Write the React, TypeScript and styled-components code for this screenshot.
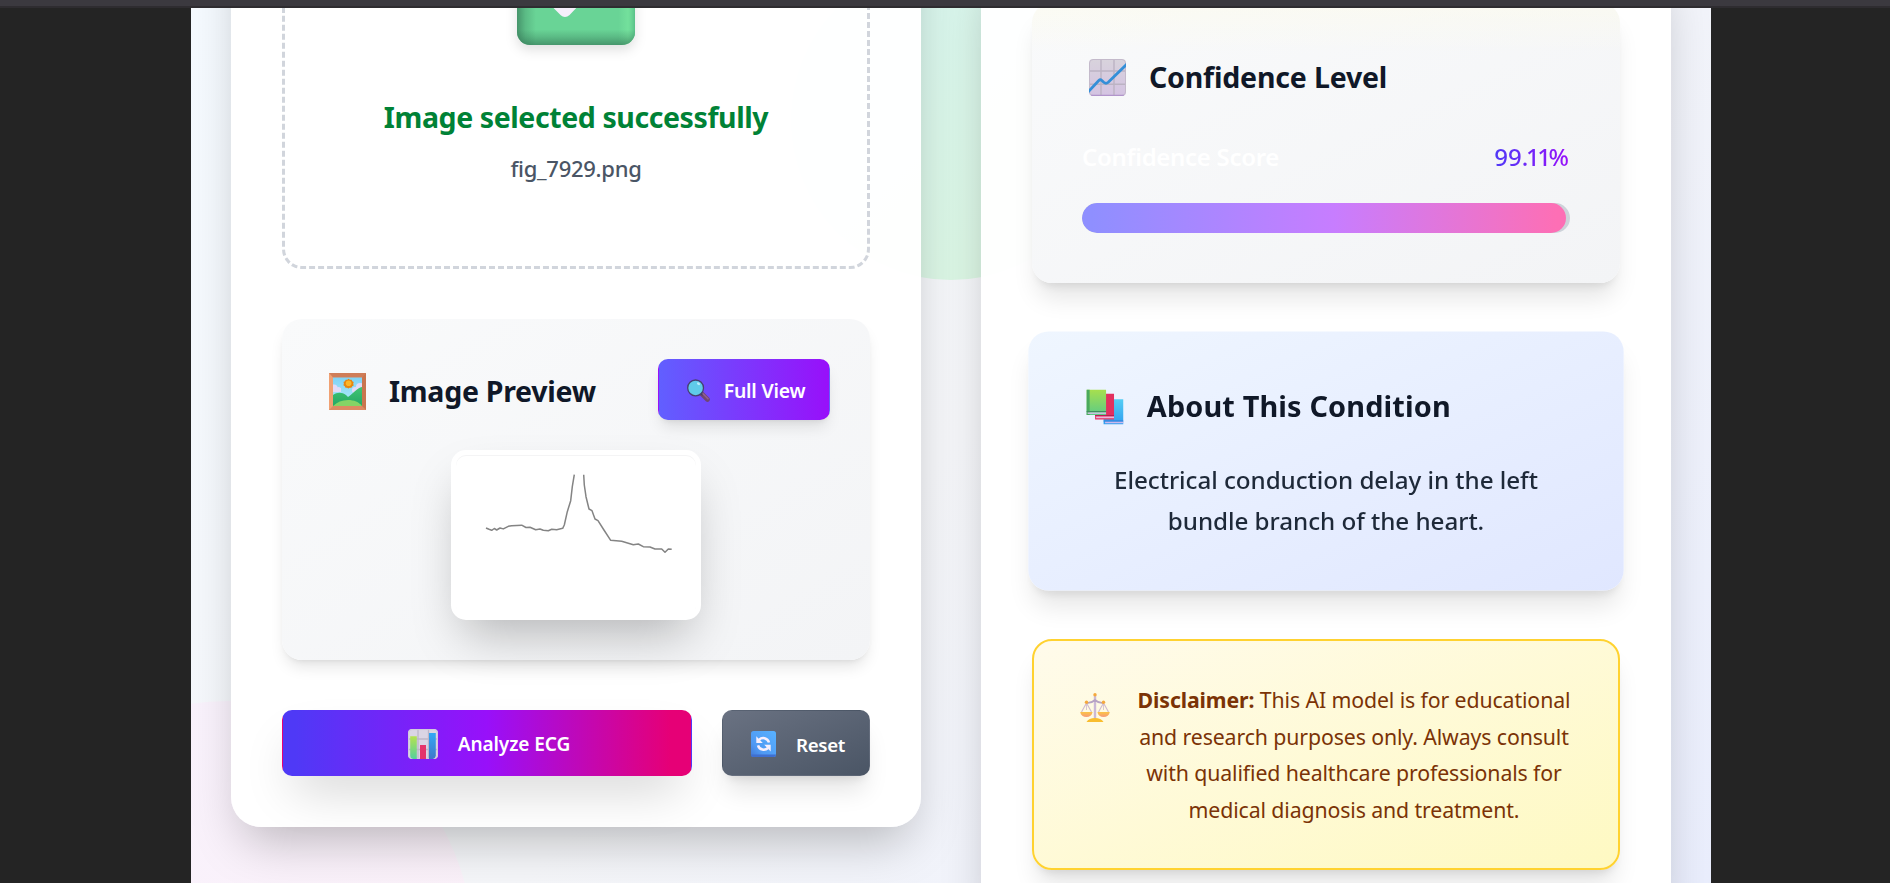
import React from 'react';
import styled, { createGlobalStyle } from 'styled-components';

const GlobalStyle = createGlobalStyle`
  * { box-sizing: border-box; }
  html, body { margin: 0; padding: 0; background: #242424; }
  body {
    overflow: hidden;
    font-family: 'Noto Sans', 'Open Sans', sans-serif;
    color: #101828;
  }
  h2, h3, p { margin: 0; }
  svg { display: block; flex: none; }
`;

/* ---------- page frame ---------- */

const Page = styled.div`
  height: 883px;
  display: flex;
  flex-direction: column;
  overflow: hidden;
  background: #242424;
`;

const TopBar = styled.div`
  flex: none;
  height: 8px;
  background: #3b393f;
  border-bottom: 2px solid #2e2c30;
`;

const Content = styled.main`
  position: relative;
  flex: none;
  width: 1520px;
  height: 875px;
  margin-left: 191px;
  padding: 0 40px;
  overflow: hidden;
  background: linear-gradient(135deg, #f5faff 0%, #f5f6f9 50%, #eaeefd 100%);
`;

const Orb = styled.div<{ $size: number; $x: number; $y: number; $fill: string }>`
  position: absolute;
  left: ${(p) => p.$x}px;
  top: ${(p) => p.$y}px;
  width: ${(p) => p.$size}px;
  height: ${(p) => p.$size}px;
  border-radius: 50%;
  background: ${(p) => p.$fill};
`;

const Columns = styled.div`
  position: relative;
  display: grid;
  grid-template-columns: 690px 690px;
  gap: 60px;
  align-items: start;
`;

const Card = styled.section<{ $lift: number }>`
  margin-top: -${(p) => p.$lift}px;
  padding: 50px;
  border: 1px solid rgba(255, 255, 255, 0.6);
  border-radius: 30px;
  background: rgba(255, 255, 255, 0.96);
  box-shadow: 0 25px 50px -12px rgba(0, 0, 0, 0.25);
`;

/* ---------- upload column ---------- */

const DropZone = styled.div`
  height: 400px;
  padding-top: 55px;
  display: flex;
  flex-direction: column;
  align-items: center;
  border: 3px dashed #d1d5dc;
  border-radius: 20px;
`;

const CheckMark = styled.div`
  filter: drop-shadow(0 5px 6px rgba(0, 0, 0, 0.12));
`;

const SuccessTitle = styled.h3`
  margin-top: 52px;
  font-size: 28.5px;
  font-weight: 700;
  line-height: 40px;
  letter-spacing: -0.41px;
  color: #008236;
`;

const FileName = styled.p`
  margin-top: 16px;
  font-size: 22px;
  font-weight: 500;
  line-height: 30px;
  letter-spacing: -0.28px;
  color: #4a5565;
`;

const PreviewCard = styled.div`
  margin-top: 50px;
  padding: 40px;
  border-radius: 20px;
  background: linear-gradient(to bottom right, #f9fafb, #f3f4f6);
  box-shadow: 0 10px 15px -3px rgba(0, 0, 0, 0.1), 0 4px 6px -4px rgba(0, 0, 0, 0.1);
`;

const PreviewHeader = styled.div`
  display: flex;
  align-items: center;
  justify-content: space-between;
  height: 61px;
`;

const Title = styled.h2<{ $track: number }>`
  display: flex;
  align-items: center;
  height: 48px;
  padding-left: 7px;
  gap: 23px;
  font-size: 28.5px;
  font-weight: 700;
  letter-spacing: ${(p) => p.$track}px;
  color: #101828;
`;

const TitleDrop = styled.div`
  padding-top: 3px;
`;

const Button = styled.button`
  display: flex;
  align-items: center;
  justify-content: center;
  border: 1px solid transparent;
  border-radius: 10px;
  font-family: inherit;
  font-weight: 600;
  color: #fff;
`;

const FullViewButton = styled(Button)`
  width: 172px;
  height: 61px;
  gap: 14px;
  padding: 1px 0 0 4px;
  font-size: 19.4px;
  letter-spacing: -0.23px;
  background-image: linear-gradient(90deg, #615fff, #9810fa);
  box-shadow: 0 10px 15px -3px rgba(0, 0, 0, 0.1), 0 4px 6px -4px rgba(0, 0, 0, 0.1);
`;

const AnalyzeButton = styled(Button)`
  flex: 1;
  height: 66px;
  gap: 20px;
  padding: 2px 0 0 4px;
  font-size: 19.1px;
  letter-spacing: -0.11px;
  background-image: linear-gradient(90deg, #4f39f6 3%, #9810fa 50%, #e60076 95%);
  box-shadow: 0 25px 50px -12px rgba(0, 0, 0, 0.18);
`;

const ResetButton = styled(Button)`
  width: 148px;
  height: 66px;
  gap: 20px;
  padding: 2px 0 0 4px;
  font-size: 18.7px;
  letter-spacing: -0.38px;
  background-image: linear-gradient(to bottom right, #6a7282, #4a5565);
  box-shadow: 0 20px 25px -5px rgba(0, 0, 0, 0.1), 0 8px 10px -6px rgba(0, 0, 0, 0.1);
`;

const Actions = styled.div`
  display: flex;
  gap: 30px;
  margin-top: 50px;
`;

const Trace = styled.figure`
  width: 250px;
  height: 170px;
  margin: 30px auto 0;
  padding: 5px;
  border-radius: 15px;
  background: #fff;
  box-shadow: 0 25px 50px -12px rgba(0, 0, 0, 0.27);
`;

const TraceImage = styled.div`
  height: 160px;
  border-radius: 10px;
  box-shadow: inset 0 1px 0 #f4f4f5;
`;

/* ---------- result column ---------- */

const ConfidenceCard = styled.div`
  height: 280px;
  padding: 50px;
  border-radius: 20px;
  background: linear-gradient(180deg, rgba(254, 252, 232, 0.45), rgba(254, 252, 232, 0) 50px),
    linear-gradient(to bottom right, #f9fafb, #f3f4f6);
  box-shadow: 0 20px 25px -5px rgba(0, 0, 0, 0.1), 0 8px 10px -6px rgba(0, 0, 0, 0.1);
`;

const ScoreRow = styled.div`
  display: flex;
  justify-content: space-between;
  align-items: center;
  height: 36px;
  margin-top: 37px;
`;

const ScoreLabel = styled.span`
  font-size: 24px;
  font-weight: 600;
  letter-spacing: -0.3px;
  color: #fff;
`;

const ScoreValue = styled.span`
  padding-right: 1px;
  font-size: 24px;
  font-weight: 500;
  background: linear-gradient(90deg, #4f39f6, #9810fa);
  background-clip: text;
  -webkit-background-clip: text;
  color: transparent;
`;

const Snug = styled.span`
  letter-spacing: -2.4px;
`;

const Track = styled.div`
  height: 30px;
  margin-top: 29px;
  border-radius: 15px;
  overflow: hidden;
  background: #cdd2d9;
`;

const Fill = styled.div`
  height: 100%;
  border-radius: 15px;
  background: linear-gradient(90deg, #8f8fff 2%, #c77dff 52%, #fd6fb5 98%);
`;

const AboutCard = styled.div`
  height: 256px;
  margin-top: 50px;
  padding: 50px;
  border-radius: 20px;
  background: linear-gradient(to bottom right, #eff6ff, #e0e7ff);
  box-shadow: 0 20px 25px -5px rgba(0, 0, 0, 0.1), 0 8px 10px -6px rgba(0, 0, 0, 0.1);
  transform: scale(1.0125);
`;

const AboutText = styled.p`
  margin-top: 29px;
  font-size: 23.9px;
  font-weight: 500;
  line-height: 39.8px;
  letter-spacing: -0.04px;
  text-align: center;
  color: #1e2939;
`;

const DisclaimerCard = styled.div`
  display: flex;
  gap: 20px;
  height: 231px;
  margin-top: 50px;
  padding: 41px 40px 39px 46px;
  border: 2px solid #ffd230;
  border-radius: 20px;
  background: linear-gradient(to bottom right, #fffbeb, #fef9c2);
  box-shadow: 0 20px 25px -5px rgba(0, 0, 0, 0.1), 0 8px 10px -6px rgba(0, 0, 0, 0.1);
`;

const ScalesSlot = styled.div`
  padding-top: 11px;
`;

const DisclaimerText = styled.p`
  flex: 1;
  font-size: 21.3px;
  line-height: 36.7px;
  letter-spacing: -0.12px;
  text-align: center;
  color: #7b3306;
`;

/* ---------- pictograms ---------- */

const CheckIcon = () => (
  <svg width="118" height="118" viewBox="0 0 118 118">
    <defs>
      <linearGradient id="ckL" x1="0" x2="1" y1="0" y2="0">
        <stop offset="0" stopColor="#2f6d50" stopOpacity=".62" />
        <stop offset=".07" stopColor="#2f6d50" stopOpacity=".25" />
        <stop offset=".16" stopColor="#2f6d50" stopOpacity="0" />
        <stop offset=".86" stopColor="#7ae8a0" stopOpacity="0" />
        <stop offset=".94" stopColor="#7ae8a0" stopOpacity=".6" />
        <stop offset="1" stopColor="#58c088" />
      </linearGradient>
      <linearGradient id="ckB" x1="0" x2="0" y1="1" y2="0">
        <stop offset="0" stopColor="#2f6d50" stopOpacity=".6" />
        <stop offset=".07" stopColor="#2f6d50" stopOpacity=".24" />
        <stop offset=".13" stopColor="#2f6d50" stopOpacity="0" />
      </linearGradient>
    </defs>
    <rect width="118" height="118" rx="13" fill="#69d496" />
    <rect width="118" height="118" rx="13" fill="url(#ckL)" />
    <rect width="118" height="118" rx="13" fill="url(#ckB)" />
    <path d="M26 62 48 84 94 36" fill="none" stroke="#f6effb" strokeWidth="12" strokeLinecap="round" strokeLinejoin="round" />
  </svg>
);

const PictureIcon = () => (
  <svg width="37" height="37" viewBox="0 0 37 37">
    <defs>
      <linearGradient id="sky" x1="0" x2="0" y1="0" y2="1">
        <stop offset="0" stopColor="#7fd3f5" />
        <stop offset="1" stopColor="#b4ecfb" />
      </linearGradient>
      <linearGradient id="hill" x1="0" x2="0" y1="0" y2="1">
        <stop offset="0" stopColor="#41c573" />
        <stop offset="1" stopColor="#22a565" />
      </linearGradient>
      <clipPath id="pane"><path d="M4 4.5h29V33H4z" /></clipPath>
    </defs>
    <path d="M0 0h37v37H0z" fill="#dd8a62" />
    <path d="M0 0h37l-4 4.500H4z" fill="#cf7d58" />
    <path d="M0 0l4 4.500V33l-4 4z" fill="#f0a173" />
    <path d="M37 0l-4 4.500V33l4 4z" fill="#c9764f" />
    <path d="M4 4.500h29V33H4z" fill="url(#sky)" />
    <g clipPath="url(#pane)">
      <g fill="#e2daf7">
        <circle cx="5" cy="15" r="3.600" /><circle cx="9.500" cy="16.500" r="2.500" /><path d="M4 15h8v4H4z" />
        <circle cx="31" cy="14" r="4" /><circle cx="26" cy="17" r="3" /><path d="M23 17h10v5H25z" />
      </g>
      <path d="M19.600 5.800l1.300 1 1.700-.1.700 1.500 1.400.9-.5 1.700.5 1.600-1.500.8-.8 1.500h-1.700l-1.300.9-1.300-.9h-1.600l-.7-1.500-1.400-.9.500-1.700-.4-1.600 1.400-.8.800-1.500h1.600z" fill="#e8860f" />
      <circle cx="19.600" cy="10.200" r="2.800" fill="#fcb628" />
      <path d="M4 22c4-3 9-3 13 0l2 2c4-3 6-5 9-7.500 2-1.700 3.500-2 5-2.500v20H4z" fill="url(#hill)" />
      <path d="M4 33c4-4 9-6 15-6s11 2 14 6z" fill="#85d465" />
    </g>
  </svg>
);

const MagnifierIcon = () => (
  <svg width="23" height="23" viewBox="0 0 23 23">
    <path d="M14.500 14.500l6 6" stroke="#6f4770" strokeWidth="4.600" strokeLinecap="round" />
    <path d="M13 13l3 3" stroke="#463a63" strokeWidth="2.400" />
    <path d="M16 14.800l5 5" stroke="#94608e" strokeWidth="1.600" strokeLinecap="round" />
    <circle cx="8.600" cy="8.900" r="7.900" fill="#5fcbe9" stroke="#464170" strokeWidth="1.300" />
    <ellipse cx="11.500" cy="4.700" rx="1.700" ry="1.200" fill="#b9edfa" transform="rotate(35 11.500 4.700)" />
  </svg>
);

const BarChartIcon = () => (
  <svg width="30" height="30" viewBox="0 0 30 30">
    <defs>
      <linearGradient id="bg1" x1="0" x2="0" y1="0" y2="1"><stop stopColor="#b4e24f" /><stop offset="1" stopColor="#55cf9d" /></linearGradient>
      <linearGradient id="bg2" x1="0" x2="0" y1="0" y2="1"><stop stopColor="#33a8f5" /><stop offset="1" stopColor="#3f77c9" /></linearGradient>
    </defs>
    <rect width="30" height="30" rx="4" fill="#dad5e4" />
    <path d="M0 10h30M0 20.500h30M10 0v30M20.500 0v30" stroke="#bdb6c8" strokeWidth="1.300" />
    <rect x=".6" y=".6" width="28.800" height="28.800" rx="3.500" fill="none" stroke="#cfc9da" />
    <path d="M2.200 7.300h6.600V30H5q-2.800-.6-2.800-3z" fill="url(#bg1)" />
    <path d="M12 16h6v14h-6z" fill="#e4346b" />
    <path d="M21 4h6.800v23q-.6 2.600-3 3H21z" fill="url(#bg2)" />
  </svg>
);

const CycleIcon = () => (
  <svg width="25" height="26" viewBox="0 0 25 26">
    <defs>
      <linearGradient id="cy" x1="0" x2="1" y1="1" y2="0">
        <stop stopColor="#4177d6" /><stop offset=".3" stopColor="#4f99f3" /><stop offset="1" stopColor="#58b2ff" />
      </linearGradient>
    </defs>
    <rect width="25" height="26" rx="2.500" fill="url(#cy)" />
    <path d="M0 23.500h25v0q0 2.500-2.500 2.500h-20Q0 26 0 23.500z" fill="#3f6fd0" />
    <g fill="none" stroke="#f7effc" strokeWidth="2.500">
      <path d="M8 8.800c3-2.800 8.500-2.200 10 2.700" />
      <path d="M17 17c-3 2.800-8.500 2.200-10-2.700" />
    </g>
    <path d="M5.300 5.300v6.700h6.500zM19.700 20.500v-6.700h-6.500z" fill="#f7effc" />
  </svg>
);

const TrendIcon = () => (
  <svg width="37" height="37" viewBox="0 0 37 37">
    <defs>
      <linearGradient id="tr" x1="0" x2="0" y1="0" y2="1"><stop stopColor="#d8d3dc" /><stop offset="1" stopColor="#d4c3e2" /></linearGradient>
      <clipPath id="trc"><rect width="37" height="37" rx="4" /></clipPath>
    </defs>
    <g clipPath="url(#trc)">
      <path d="M0 0h37v37H0z" fill="url(#tr)" />
      <path d="M0 12h37M0 25.300h37M12 0v37M25 0v37" stroke="#bcb3c3" strokeWidth="1.400" />
      <rect x=".5" y=".5" width="36" height="36" rx="3.500" fill="none" stroke="#c4bacb" />
      <path d="M2 36.400h33" stroke="#b195cb" strokeWidth="1.500" />
      <path d="M-1 33L9.800 21.500q1.500-1.400 3 0l2.200 2q2 1.500 4 0L38 5" fill="none" stroke="#348fd8" strokeWidth="2.800" />
    </g>
  </svg>
);

const BooksIcon = () => (
  <svg width="37" height="35" viewBox="-0.6 -0.6 37.600 35.600">
    <defs>
      <linearGradient id="bk1" x1="0" x2="0" y1="0" y2="1"><stop stopColor="#a7df4e" /><stop offset="1" stopColor="#5ccb86" /></linearGradient>
      <linearGradient id="bk3" x1="0" x2="0" y1="0" y2="1"><stop stopColor="#55cdf4" /><stop offset="1" stopColor="#2f9ff0" /></linearGradient>
    </defs>
    <path d="M17 9.500h20V35H17z" fill="url(#bk3)" />
    <path d="M17 31h20v1H17z" fill="#3477d6" /><path d="M18.500 32.200H37v1.600H18.500z" fill="#cdb8ec" />
    <path d="M8.500 4h19v26h-19z" fill="#e2305f" />
    <path d="M8.500 25.500h19v1h-19z" fill="#b71f55" /><path d="M9.500 26.800h18v1.800h-18z" fill="#e9b6da" />
    <path d="M0 0h19.500v25.500H0z" fill="url(#bk1)" />
    <path d="M0 0h3v25.500H0z" fill="#4aa95e" />
    <path d="M0 21.500h19.500v1H0z" fill="#418b62" /><path d="M1 22.800h18.500v1.700H1z" fill="#c9bfe0" />
  </svg>
);

const ScalesIcon = () => (
  <svg width="30" height="30" viewBox="0 0 30 30">
    <defs>
      <linearGradient id="pan" x1="0" x2="0" y1="0" y2="1"><stop stopColor="#fcc444" /><stop offset="1" stopColor="#f79a7b" /></linearGradient>
    </defs>
    <g fill="none" stroke="#cfb9cf" strokeWidth="1.100">
      <path d="M6.500 10L1.500 19M6.500 10l5 9M23.500 10l-5 9M23.500 10l5 9" />
      <path d="M6.500 10v7M23.500 10v7" strokeWidth=".8" />
    </g>
    <path d="M15 2v25" stroke="#cbb9d6" strokeWidth="2.400" />
    <path d="M6.500 9.800c4 .7 6-.6 8.500-2.800 2.500 2.200 4.500 3.500 8.500 2.800" fill="none" stroke="#b7a3c4" strokeWidth="1.800" />
    <path d="M.2 19h12.400c-.5 3.400-3 5-6.200 5S.7 22.400.2 19zM17.400 19h12.400c-.5 3.400-3 5-6.200 5s-5.700-1.600-6.200-5z" fill="url(#pan)" />
    <path d="M6.500 29c1.500-2.700 4.500-4 8.500-4s7 1.300 8.500 4z" fill="#f9bd2e" />
    <g fill="#f5a83c"><circle cx="15" cy="1.800" r="1.700" /><circle cx="6.500" cy="9.300" r="1.700" /><circle cx="23.500" cy="9.300" r="1.700" /></g>
  </svg>
);

const EcgTrace = () => (
  <svg width="240" height="160" viewBox="456 455 240 160">
    <g fill="none" stroke="#848484" strokeWidth="1.500" strokeLinejoin="round">
      <path d="M486 528 489 529.300 491.700 530.300 494.300 528.500 496.700 530 500 528 503.300 528.900 508.300 526.300 511.700 525.700 521.700 525.200 526 527.500 530 527.200 535.700 529.700 540 529 543.300 530.300 548.300 530.700 551.700 529.300 556.700 529.700 562.700 528.300 564.300 525 567.300 511.700 570.700 500.700 572.300 486.700 574.300 474.700" />
      <path d="M583.700 474.700 584.300 485 586 496.700 589 509 592 510.700 595 519 598 520.700 603.300 529 610.700 540.300 621.700 541.300 633.300 544.700 638.300 544 643.300 546.700 650 547 655 549 661.700 549 665 552.300 668.300 549 671.700 549.300" />
    </g>
  </svg>
);

const CONFIDENCE = 99.11;

export default function App() {
  return (
    <>
      <GlobalStyle />
      <Page>
        <TopBar />
        <Content>
          <Orb $size={320} $x={600} $y={-48} $fill="linear-gradient(135deg, #d8f6f2, #dcf6e0)" />
          <Orb $size={490} $x={-208} $y={693} $fill="linear-gradient(135deg, #f8f2fd, #fcf1f8)" />
          <Columns>
            <Card $lift={190}>
              <DropZone>
                <CheckMark><CheckIcon /></CheckMark>
                <SuccessTitle>Image selected successfully</SuccessTitle>
                <FileName>fig_7929.png</FileName>
              </DropZone>
              <PreviewCard>
                <PreviewHeader>
                  <TitleDrop>
                    <Title $track={-0.27}><PictureIcon />Image Preview</Title>
                  </TitleDrop>
                  <FullViewButton><MagnifierIcon />Full View</FullViewButton>
                </PreviewHeader>
                <Trace><TraceImage><EcgTrace /></TraceImage></Trace>
              </PreviewCard>
              <Actions>
                <AnalyzeButton><BarChartIcon />Analyze ECG</AnalyzeButton>
                <ResetButton><CycleIcon />Reset</ResetButton>
              </Actions>
            </Card>
            <Card $lift={56}>
              <ConfidenceCard>
                <Title $track={-0.18}><TrendIcon />Confidence Level</Title>
                <ScoreRow>
                  <ScoreLabel>Confidence Score</ScoreLabel>
                  <ScoreValue>99<Snug>.11</Snug>%</ScoreValue>
                </ScoreRow>
                <Track><Fill style={{ width: `${CONFIDENCE}%` }} /></Track>
              </ConfidenceCard>
              <AboutCard>
                <Title $track={0.14}><BooksIcon />About This Condition</Title>
                <AboutText>
                  Electrical conduction delay in the left<br />bundle branch of the heart.
                </AboutText>
              </AboutCard>
              <DisclaimerCard>
                <ScalesSlot><ScalesIcon /></ScalesSlot>
                <DisclaimerText>
                  <strong>Disclaimer:</strong> This AI model is for educational<br />
                  and research purposes only. Always consult<br />
                  with qualified healthcare professionals for<br />
                  medical diagnosis and treatment.
                </DisclaimerText>
              </DisclaimerCard>
            </Card>
          </Columns>
        </Content>
      </Page>
    </>
  );
}
